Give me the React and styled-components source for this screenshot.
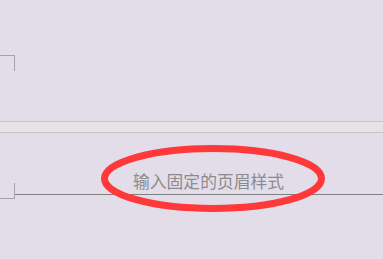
import React from 'react';
import styled, { createGlobalStyle } from 'styled-components';

const GlobalStyle = createGlobalStyle`
  html, body {
    margin: 0;
    padding: 0;
    background: #e3dde9;
  }
  body {
    font-family: "Noto Sans CJK SC", "Noto Sans", sans-serif;
  }
`;

const Screen = styled.div`
  position: relative;
  width: 383px;
  height: 259px;
  overflow: hidden;
  background: #e3dde9;
  display: flex;
  flex-direction: column;
`;

const PageBottom = styled.div`
  height: 121px;
  padding-top: 55px;
  box-sizing: border-box;
`;

const CornerMarkTop = styled.div`
  width: 15px;
  height: 16px;
  border-top: 1px solid #a3a3a3;
  border-right: 1px solid #a3a3a3;
  box-sizing: border-box;
`;

const PageGap = styled.div`
  height: 12px;
  background: #e5e5e5;
  border-top: 1px solid #c5c5c5;
  border-bottom: 1px solid #c5c5c5;
  box-sizing: border-box;
`;

const PageTop = styled.div`
  flex: 1;
  padding-top: 50px;
  display: flex;
  align-items: flex-start;
`;

const CornerMarkBottom = styled.div`
  flex: none;
  width: 15px;
  height: 16px;
  border-bottom: 1px solid #a3a3a3;
  border-right: 1px solid #a3a3a3;
  box-sizing: border-box;
`;

const HeaderArea = styled.div`
  flex: 1;
  height: 24px;
  margin-top: -13px;
  padding-left: 118px;
  border-bottom: 1px solid #808080;
  display: flex;
  align-items: flex-end;
`;

const HeaderText = styled.span`
  margin-bottom: 2px;
  font-size: 16.8px;
  line-height: 22px;
  color: #8c8c8c;
  white-space: nowrap;
`;

const Mark = styled.svg`
  position: absolute;
  left: 0;
  top: 0;
  pointer-events: none;
`;

export default function App() {
  return (
    <>
      <GlobalStyle />
      <Screen>
        <PageBottom>
          <CornerMarkTop />
        </PageBottom>
        <PageGap />
        <PageTop>
          <CornerMarkBottom />
          <HeaderArea>
            <HeaderText>输入固定的页眉样式</HeaderText>
          </HeaderArea>
        </PageTop>
        <Mark width="383" height="259" viewBox="0 0 383 259">
          <ellipse cx="213" cy="178.5" rx="108.5" ry="30" fill="none" stroke="#ff3939" strokeWidth="7" />
        </Mark>
      </Screen>
    </>
  );
}
